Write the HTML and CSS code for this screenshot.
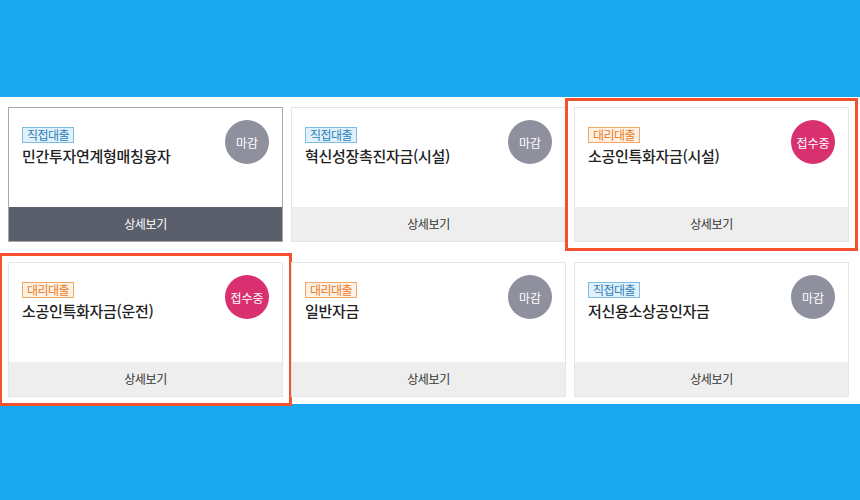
FILE: index.html
```html
<!DOCTYPE html>
<html lang="ko">
<head>
  <meta charset="UTF-8" />
  <meta name="viewport" content="width=device-width, initial-scale=1" />
  <title>정책자금 목록</title>
  <link rel="stylesheet" href="styles.css">
</head>
<body>
  <div class="top-band"></div>
  <div class="fund-list">
    <div class="fund-card hover">
      <div class="fund-body">
        <div class="fund-info">
          <span class="badge direct">직접대출</span>
          <div class="fund-name">민간투자연계형매칭융자</div>
        </div>
        <span class="status closed">마감</span>
      </div>
      <div class="fund-more">상세보기</div>
    </div>
    <div class="fund-card">
      <div class="fund-body">
        <div class="fund-info">
          <span class="badge direct">직접대출</span>
          <div class="fund-name">혁신성장촉진자금(시설)</div>
        </div>
        <span class="status closed">마감</span>
      </div>
      <div class="fund-more">상세보기</div>
    </div>
    <div class="fund-card marked">
      <div class="fund-body">
        <div class="fund-info">
          <span class="badge agent">대리대출</span>
          <div class="fund-name">소공인특화자금(시설)</div>
        </div>
        <span class="status open">접수중</span>
      </div>
      <div class="fund-more">상세보기</div>
    </div>
    <div class="fund-card marked">
      <div class="fund-body">
        <div class="fund-info">
          <span class="badge agent">대리대출</span>
          <div class="fund-name">소공인특화자금(운전)</div>
        </div>
        <span class="status open">접수중</span>
      </div>
      <div class="fund-more">상세보기</div>
    </div>
    <div class="fund-card">
      <div class="fund-body">
        <div class="fund-info">
          <span class="badge agent">대리대출</span>
          <div class="fund-name">일반자금</div>
        </div>
        <span class="status closed">마감</span>
      </div>
      <div class="fund-more">상세보기</div>
    </div>
    <div class="fund-card">
      <div class="fund-body">
        <div class="fund-info">
          <span class="badge direct">직접대출</span>
          <div class="fund-name">저신용소상공인자금</div>
        </div>
        <span class="status closed">마감</span>
      </div>
      <div class="fund-more">상세보기</div>
    </div>
  </div>
</body>
</html>
```

FILE: styles.css
```css
body {
  margin: 0;
  padding: 0;
  background: #19a8f0;
  font-family: "Noto Sans CJK KR", "Noto Sans", sans-serif;
  color: #222;
  height: 500px;
  overflow: hidden;
}

.top-band {
  height: 97px;
}

.fund-list {
  background: #fff;
  padding: 10px 11px 7px 8px;
  display: grid;
  grid-template-columns: repeat(3, 275px);
  column-gap: 8px;
  row-gap: 20px;
}

.fund-card {
  box-sizing: border-box;
  height: 135px;
  border: 1px solid #e6e6e6;
  display: flex;
  flex-direction: column;
  background: #fff;
}

.fund-card.hover {
  border-color: #a7a7a7;
}

.fund-card.marked {
  outline: 3px solid #f4522f;
  outline-offset: 6px;
}

.fund-body {
  flex: 1;
  display: flex;
  justify-content: space-between;
  align-items: flex-start;
  padding: 12px 13px 0 13px;
}

.fund-info {
  padding-top: 7px;
  display: flex;
  flex-direction: column;
  align-items: flex-start;
}

.badge {
  font-size: 12px;
  line-height: 14px;
  padding: 0 4px;
  border: 1px solid;
  letter-spacing: -0.5px;
}

.badge.direct {
  color: #2f7fb8;
  background: #e1f1fb;
  border-color: #7fbde2;
}

.badge.agent {
  color: #ee7a22;
  background: #fdf1e6;
  border-color: #f1a766;
}

.fund-name {
  margin-top: 3px;
  font-size: 15px;
  font-weight: 500;
  line-height: 20px;
  letter-spacing: -0.3px;
}

.status {
  width: 44px;
  height: 44px;
  border-radius: 50%;
  display: flex;
  justify-content: center;
  align-items: center;
  color: #fff;
  font-size: 12px;
}

.status.closed {
  background: #8e909e;
}

.status.open {
  background: #d9316f;
}

.fund-more {
  height: 34px;
  background: #eeeeee;
  text-align: center;
  line-height: 34px;
  font-size: 12px;
  letter-spacing: -0.4px;
  color: #333;
}

.fund-card.hover .fund-more {
  background: #5b5f6b;
  color: #fff;
}
```
